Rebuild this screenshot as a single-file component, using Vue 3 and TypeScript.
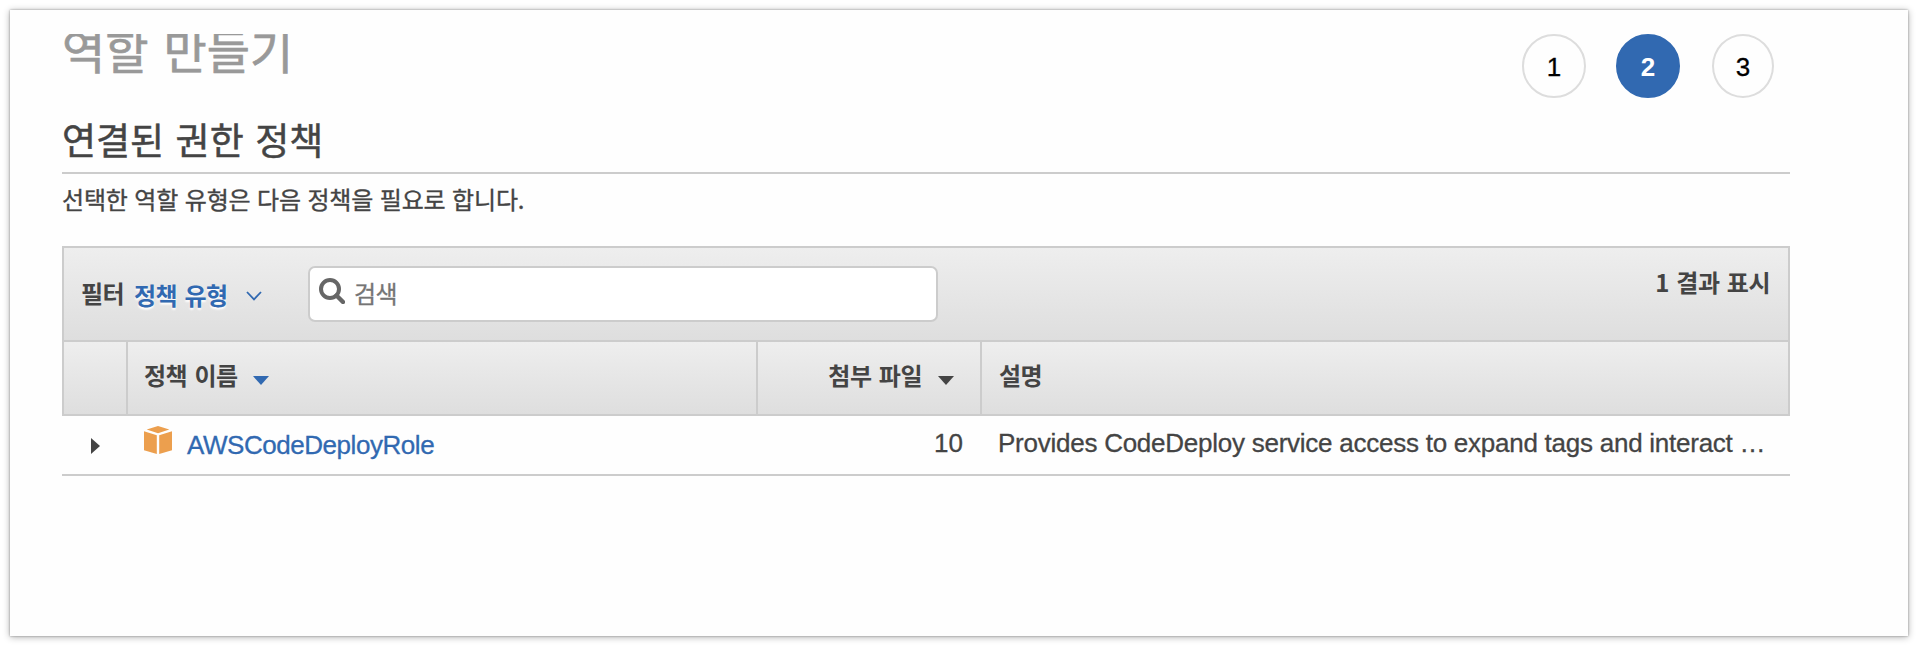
<script setup lang="ts">
interface Step {
  label: string
  active: boolean
}
interface Policy {
  name: string
  attachments: number
  description: string
}

const steps: Step[] = [
  { label: '1', active: false },
  { label: '2', active: true },
  { label: '3', active: false },
]
const policies: Policy[] = [
  {
    name: 'AWSCodeDeployRole',
    attachments: 10,
    description: 'Provides CodeDeploy service access to expand tags and interact …',
  },
]
</script>

<template>
  <div class="page">
    <main class="panel">
      <header class="top">
        <h1 class="title"><span>역할 만들기</span></h1>
        <ol class="steps">
          <li v-for="s in steps" :key="s.label" class="step" :class="{ active: s.active }">{{ s.label }}</li>
        </ol>
      </header>
      <h2 class="subtitle">연결된 권한 정책</h2>
      <p class="hint">선택한 역할 유형은 다음 정책을 필요로 합니다.</p>

      <section class="box">
        <div class="toolbar">
          <span class="filter">필터</span>
          <a class="type">정책 유형</a>
          <svg class="chevron" width="16" height="10" viewBox="0 0 16 10">
            <path d="M1 1 L8 8.4 L15 1" fill="none" stroke="#3169b1" stroke-width="1.8" />
          </svg>
          <div class="search">
            <svg class="lens" width="26" height="26" viewBox="0 0 26 26">
              <circle cx="11" cy="11" r="9" fill="none" stroke="#666" stroke-width="4" />
              <path d="M17.5 17.5 L24 24" stroke="#666" stroke-width="4.4" stroke-linecap="round" />
            </svg>
            <span class="placeholder">검색</span>
          </div>
          <span class="count">1 결과 표시</span>
        </div>
        <div class="row head">
          <div class="cell"></div>
          <div class="cell name-head">
            <span>정책 이름</span>
            <svg class="caret" width="16" height="9" viewBox="0 0 16 9"><path d="M0 0H16L8 9Z" fill="#3169b1" /></svg>
          </div>
          <div class="cell files-head">
            <span>첨부 파일</span>
            <svg class="caret" width="16" height="9" viewBox="0 0 16 9"><path d="M0 0H16L8 9Z" fill="#444" /></svg>
          </div>
          <div class="cell desc-head"><span>설명</span></div>
        </div>
      </section>
      <div v-for="p in policies" :key="p.name" class="row data">
        <div class="expand">
          <svg width="9" height="16" viewBox="0 0 9 16"><path d="M0 0L9 8L0 16Z" fill="#444" /></svg>
        </div>
        <div class="name">
          <svg class="cube" width="28" height="28" viewBox="0 0 28 28" fill="#ec9f4e">
            <path d="M14 0L25.3 3.6L14 7.3L2.7 3.6Z" />
            <path d="M0 5.2L12.8 9.2V28L0 24.2Z" />
            <path d="M28 5.2L15.2 9.2V28L28 24.2Z" />
          </svg>
          <a class="link">{{ p.name }}</a>
        </div>
        <div class="files">{{ p.attachments }}</div>
        <div class="desc">{{ p.description }}</div>
      </div>
    </main>
  </div>
</template>

<style>
body {
  margin: 0;
  background: #fff;
}
</style>

<style scoped>
* {
  box-sizing: border-box;
}
.page {
  height: 646px;
  padding: 10px;
  overflow: hidden;
  font-family: "Liberation Sans", "Noto Sans CJK KR", sans-serif;
  font-size: 26px;
  color: #444;
}
.panel {
  width: 1898px;
  height: 626px;
  padding: 24px 118px 0 52px;
  background: #fefefe;
  box-shadow: 0 0 2px rgba(0, 0, 0, 0.35), 0 1px 7px rgba(0, 0, 0, 0.32);
}
.top {
  display: flex;
  justify-content: space-between;
  height: 64px;
}
.title {
  margin: 0;
  height: 64px;
  overflow: hidden;
  font-family: "Noto Sans CJK KR", sans-serif;
  font-size: 47px;
  font-weight: 400;
  line-height: 60px;
  color: #999;
  word-spacing: 4.5px;
  -webkit-text-stroke: 0.7px #999;
}
.title span {
  display: block;
  margin-top: -15px;
}
.steps {
  display: flex;
  gap: 30px;
  margin: 0;
  padding: 0 16px 0 0;
  list-style: none;
}
.step {
  width: 64px;
  height: 64px;
  border: 2px solid #ddd;
  border-radius: 50%;
  line-height: 62px;
  text-align: center;
  color: #000;
  -webkit-text-stroke: 0.3px currentColor;
}
.step:last-child {
  width: 62px;
  margin-left: 2px;
}
.step.active {
  border-color: #3169b1;
  background: #3169b1;
  color: #fff;
  font-weight: 700;
  -webkit-text-stroke: 0;
}
.subtitle {
  margin: 0;
  height: 76px;
  padding-top: 16px;
  border-bottom: 2px solid #ccc;
  font-family: "Noto Sans CJK KR", sans-serif;
  font-size: 37px;
  font-weight: 400;
  line-height: 50px;
  word-spacing: 3.2px;
  -webkit-text-stroke: 0.5px #444;
}
.hint {
  margin: 0;
  height: 72px;
  padding-top: 8px;
  font-family: "Noto Sans CJK KR", sans-serif;
  font-size: 24px;
  line-height: 34px;
  letter-spacing: -0.15px;
  word-spacing: 1.3px;
  -webkit-text-stroke: 0.35px #444;
}
.box {
  border: 2px solid #ccc;
  font-family: "Noto Sans CJK KR", sans-serif;
  font-size: 24px;
  font-weight: 700;
  line-height: 34px;
  letter-spacing: -0.5px;
  word-spacing: 2.4px;
}
.toolbar {
  display: flex;
  align-items: flex-start;
  height: 94px;
  padding: 17px 18px 0 17px;
  border-bottom: 2px solid #ccc;
  background: linear-gradient(#eee, #dedede);
}
.filter {
  width: 53px;
  margin-top: 11px;
}
.type {
  width: 94px;
  margin-top: 13px;
  color: #3169b1;
  white-space: nowrap;
  text-shadow: 0 2px 2px #fff;
}
.chevron {
  margin: 26px 0 0 18px;
}
.search {
  display: flex;
  width: 630px;
  height: 56px;
  margin-top: 1px;
  margin-left: 46px;
  border: 2px solid #ccc;
  border-radius: 7px;
  background: #fff;
}
.lens {
  margin: 10px 0 0 9px;
}
.placeholder {
  margin: 8px 0 0 9px;
  font-weight: 400;
  color: #757575;
  -webkit-text-stroke: 0.3px #757575;
}
.count {
  margin-left: auto;
}
.row {
  display: grid;
}
.head {
  grid-template-columns: 62px 630px 224px 1fr;
  height: 72px;
  background: linear-gradient(#eee, #dedede);
}
.cell {
  display: flex;
  padding: 16px 17px 0 16px;
}
.cell + .cell {
  border-left: 2px solid #ccc;
}
.caret {
  margin: 18px 0 0 15px;
}
.files-head {
  justify-content: flex-end;
  padding-right: 26px;
}
.files-head .caret {
  margin-left: 16px;
}
.desc-head {
  padding-left: 17px;
}
.data {
  grid-template-columns: 66px 628px 224px 1fr;
  height: 60px;
  border-bottom: 2px solid #ccc;
  line-height: 30px;
  -webkit-text-stroke: 0.3px currentColor;
}
.expand {
  display: flex;
  padding: 22px 0 0 29px;
}
.name {
  display: flex;
  padding: 10px 0 0 16px;
}
.link {
  margin: 4px 0 0 15px;
  color: #3169b1;
  letter-spacing: -0.45px;
}
.files {
  padding: 12px 17px 0 0;
  text-align: right;
}
.desc {
  padding: 12px 0 0 18px;
  white-space: nowrap;
  letter-spacing: -0.25px;
}
</style>
